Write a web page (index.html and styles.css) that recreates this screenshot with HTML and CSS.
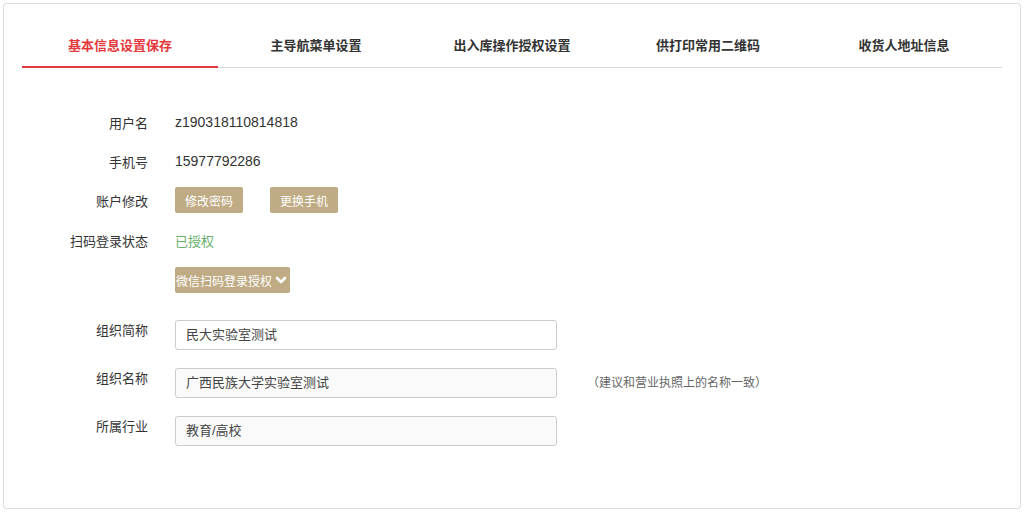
FILE: index.html
```html
<!DOCTYPE html>
<html lang="zh-CN">
<head>
<meta charset="utf-8">
<title>基本信息设置</title>
<link rel="stylesheet" href="styles.css">
</head>
<body>
<div class="card">
  <div class="tabs">
    <div class="tab active">基本信息设置保存</div>
    <div class="tab">主导航菜单设置</div>
    <div class="tab">出入库操作授权设置</div>
    <div class="tab">供打印常用二维码</div>
    <div class="tab">收货人地址信息</div>
  </div>
  <div class="form">
    <div class="group">
      <div class="row">
        <div class="label">用户名</div>
        <div class="value">z190318110814818</div>
      </div>
      <div class="row">
        <div class="label">手机号</div>
        <div class="value">15977792286</div>
      </div>
      <div class="row">
        <div class="label">账户修改</div>
        <div class="value btns">
          <span class="btn">修改密码</span>
          <span class="btn">更换手机</span>
        </div>
      </div>
      <div class="row">
        <div class="label">扫码登录状态</div>
        <div class="value ok">已授权</div>
      </div>
      <div class="row">
        <div class="label"></div>
        <div class="value">
          <span class="btn drop">微信扫码登录授权<svg class="chev" viewBox="0 0 12 12" width="12" height="12"><path d="M2 4 L6 8 L10 4" fill="none" stroke="#fff" stroke-width="2.6" stroke-linecap="round" stroke-linejoin="round"/></svg></span>
        </div>
      </div>
    </div>
    <div class="inputs">
      <div class="irow">
        <div class="label">组织简称</div>
        <div class="input">民大实验室测试</div>
      </div>
      <div class="irow">
        <div class="label">组织名称</div>
        <div class="input soft">广西民族大学实验室测试</div>
        <div class="hint">（建议和营业执照上的名称一致）</div>
      </div>
      <div class="irow">
        <div class="label">所属行业</div>
        <div class="input soft">教育/高校</div>
      </div>
    </div>
  </div>
</div>
</body>
</html>
```

FILE: styles.css
```css
* { box-sizing: border-box; }
body {
  margin: 0;
  background: #fff;
  font-family: "Liberation Sans", "Noto Sans CJK SC", sans-serif;
  color: #333;
}
.card {
  margin: 3px;
  width: 1018px;
  height: 506px;
  border: 1px solid #ddd;
  border-radius: 3px;
  background: #fff;
}
.tabs {
  display: flex;
  margin: 0 0 0 18px;
  width: 980px;
  height: 64px;
  border-bottom: 1px solid #d8d8d8;
}
.tab {
  flex: 1;
  text-align: center;
  font-size: 13px;
  font-weight: bold;
  color: #333;
  padding-top: 32px;
  line-height: 20px;
}
.tab.active {
  color: #e4393c;
  border-bottom: 2px solid #e4393c;
  margin-bottom: -1px;
}
.form {
  padding-top: 41px;
}
.group {
  display: flex;
  flex-direction: column;
  gap: 13px;
}
.row {
  display: flex;
  align-items: center;
  height: 26px;
}
.row:nth-child(4), .row:nth-child(5) { margin-top: 1px; }
.label {
  width: 144px;
  flex: none;
  text-align: right;
  font-size: 13px;
  color: #333;
}
.value {
  margin-left: 27px;
  font-size: 14px;
  color: #333;
}
.btns { display: flex; gap: 27px; }
.btn {
  display: inline-flex;
  align-items: center;
  justify-content: center;
  height: 26px;
  width: 68px;
  background: #bfab84;
  color: #fff;
  font-size: 12px;
  border-radius: 2px;
}
.btn.drop {
  width: 115px;
  justify-content: flex-start;
  padding-left: 1px;
  white-space: nowrap;
}
.chev { margin-left: 3px; }
.ok { color: #66b06c; font-size: 13px; }
.inputs {
  margin-top: 27px;
  display: flex;
  flex-direction: column;
  gap: 18px;
}
.irow {
  display: flex;
  align-items: flex-start;
  height: 30px;
}
.irow .label { padding-top: 2px; line-height: 18px; }
.input {
  margin-left: 27px;
  width: 382px;
  height: 30px;
  border: 1px solid #ccc;
  border-radius: 3px;
  padding-left: 10px;
  font-size: 13px;
  line-height: 28px;
  color: #444;
  background: #fff;
}
.input.soft { background: #fafafa; }
.hint {
  margin-left: 30px;
  font-size: 12px;
  color: #666;
  line-height: 30px;
}
```
